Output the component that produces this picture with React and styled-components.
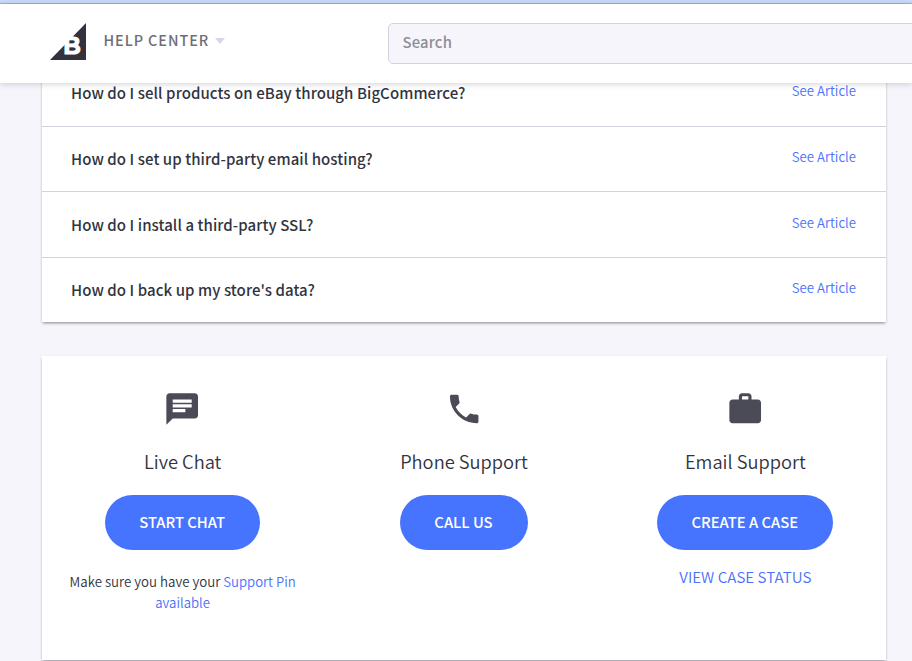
import React from 'react';
import styled, { createGlobalStyle } from 'styled-components';
import { MdChat, MdPhone, MdWork } from 'react-icons/md';

const GlobalStyle = createGlobalStyle`
    * {
        box-sizing: border-box;
    }
    body {
        margin: 0;
        overflow: hidden;
        background: #f6f5fb;
        color: #313440;
        font-family: 'Noto Sans CJK SC', 'Noto Sans', sans-serif;
    }
`;

const Page = styled.div`
    height: 661px;
    overflow: hidden;
`;

const TopStrip = styled.div`
    height: 4px;
    border-bottom: 1px solid #9db1dc;
    background: #c9daf8;
`;

const Header = styled.header`
    position: relative;
    z-index: 1;
    display: flex;
    align-items: flex-start;
    height: 79px;
    padding: 19px 0 0 50px;
    background: #fff;
    box-shadow: 0 1px 6px rgba(49, 44, 80, 0.22);
`;

const Brand = styled.div`
    display: flex;
    flex: 0 0 338px;
    align-items: flex-start;
`;

const BrandName = styled.span`
    margin-left: 17.5px;
    color: #6f6e77;
    font-size: 14.4px;
    font-weight: 500;
    line-height: 34px;
    letter-spacing: 0.94px;
    white-space: nowrap;
`;

const Caret = styled.span`
    margin: 15px 0 0 6px;
    border: 5px solid transparent;
    border-top: 6px solid #d3d7e6;
    border-bottom: 0;
`;

const Search = styled.input`
    flex: 0 0 560px;
    height: 41px;
    padding: 0 14px 4px 13.5px;
    border: 1px solid #d0d4e0;
    border-radius: 5px;
    background: #f6f5fb;
    font-family: inherit;
    font-size: 14.8px;
    font-weight: 500;
    letter-spacing: 0.2px;

    &::placeholder {
        color: #8d8e99;
        opacity: 1;
    }
`;

const Content = styled.main`
    display: flex;
    flex-direction: column;
    gap: 34px;
    width: 844px;
    margin: -22px 0 0 42px;
`;

const Card = styled.section`
    background: #fff;
    box-shadow: 0 2px 3px -1px rgba(40, 40, 50, 0.45), 0 1px 2px rgba(49, 52, 64, 0.12);
`;

const Article = styled.div`
    display: flex;
    justify-content: space-between;
    height: ${props => props.height}px;
    padding: ${props => props.top || 19}px 30px 0 29px;
    border-bottom: ${props => (props.last ? 0 : '1px solid #d0d4e0')};
`;

const Question = styled.span`
    font-size: 15px;
    font-weight: 500;
    line-height: 26px;
    letter-spacing: 0.07px;
`;

const Link = styled.a`
    color: #4b71fc;
    text-decoration: none;
    font-size: ${props => props.size || 13.2}px;
    font-weight: 350;
    line-height: ${props => props.line || 21}px;
`;

const Support = styled(Card)`
    display: grid;
    grid-template-columns: repeat(3, 1fr);
    height: 304px;
    padding-top: 34px;
`;

const Channel = styled.div`
    display: flex;
    flex-direction: column;
    align-items: center;
    padding: 0 20px;
    color: #4b4a57;

    svg {
        width: 38.4px;
        height: 38px;
    }
`;

const Title = styled.h3`
    margin: 17px 0 18px;
    color: #313440;
    font-size: 18.3px;
    font-weight: 350;
    line-height: 32px;
`;

const Button = styled.button`
    width: ${props => props.width}px;
    height: 55px;
    padding: 0 1px 2px 0;
    border: 0;
    border-radius: 28px;
    background: #4674ff;
    color: #fff;
    font-family: inherit;
    font-size: 14.8px;
    font-weight: 500;
    white-space: nowrap;
`;

const Note = styled.p`
    margin: 21px 0 0;
    color: #313440;
    font-size: 13.3px;
    font-weight: 350;
    line-height: 21px;
    text-align: center;
`;

const StatusLink = styled(Link)`
    margin-top: 12px;
`;

const articles = [
    { question: 'How do I sell products on eBay through BigCommerce?', height: 66 },
    { question: 'How do I set up third-party email hosting?', height: 65 },
    { question: 'How do I install a third-party SSL?', height: 66, top: 20 },
    { question: "How do I back up my store's data?", height: 64 }
];

const Logo = () => (
    <svg width="36" height="37" viewBox="0 0 36 37">
        <path d="M36 0V37H0Z" fill="#34313f" />
        <text
            x="13.4"
            y="31"
            fill="#fff"
            stroke="#fff"
            strokeWidth="1.2"
            fontFamily="Liberation Sans, sans-serif"
            fontSize="24"
            fontWeight="700"
        >
            B
        </text>
    </svg>
);

const App = () => (
    <Page>
        <GlobalStyle />
        <TopStrip />
        <Header>
            <Brand>
                <Logo />
                <BrandName>HELP CENTER</BrandName>
                <Caret />
            </Brand>
            <Search placeholder="Search" />
        </Header>
        <Content>
            <Card>
                {articles.map((article, i) => (
                    <Article
                        key={article.question}
                        height={article.height}
                        top={article.top}
                        last={i === articles.length - 1}
                    >
                        <Question>{article.question}</Question>
                        <Link>See Article</Link>
                    </Article>
                ))}
            </Card>
            <Support>
                <Channel>
                    <MdChat />
                    <Title>Live Chat</Title>
                    <Button width={155}>START CHAT</Button>
                    <Note>
                        Make sure you have your <Link>Support Pin available</Link>
                    </Note>
                </Channel>
                <Channel>
                    <MdPhone />
                    <Title>Phone Support</Title>
                    <Button width={128}>CALL US</Button>
                </Channel>
                <Channel>
                    <MdWork />
                    <Title>Email Support</Title>
                    <Button width={176}>CREATE A CASE</Button>
                    <StatusLink size={15.15} line={28}>
                        VIEW CASE STATUS
                    </StatusLink>
                </Channel>
            </Support>
        </Content>
    </Page>
);

export default App;
